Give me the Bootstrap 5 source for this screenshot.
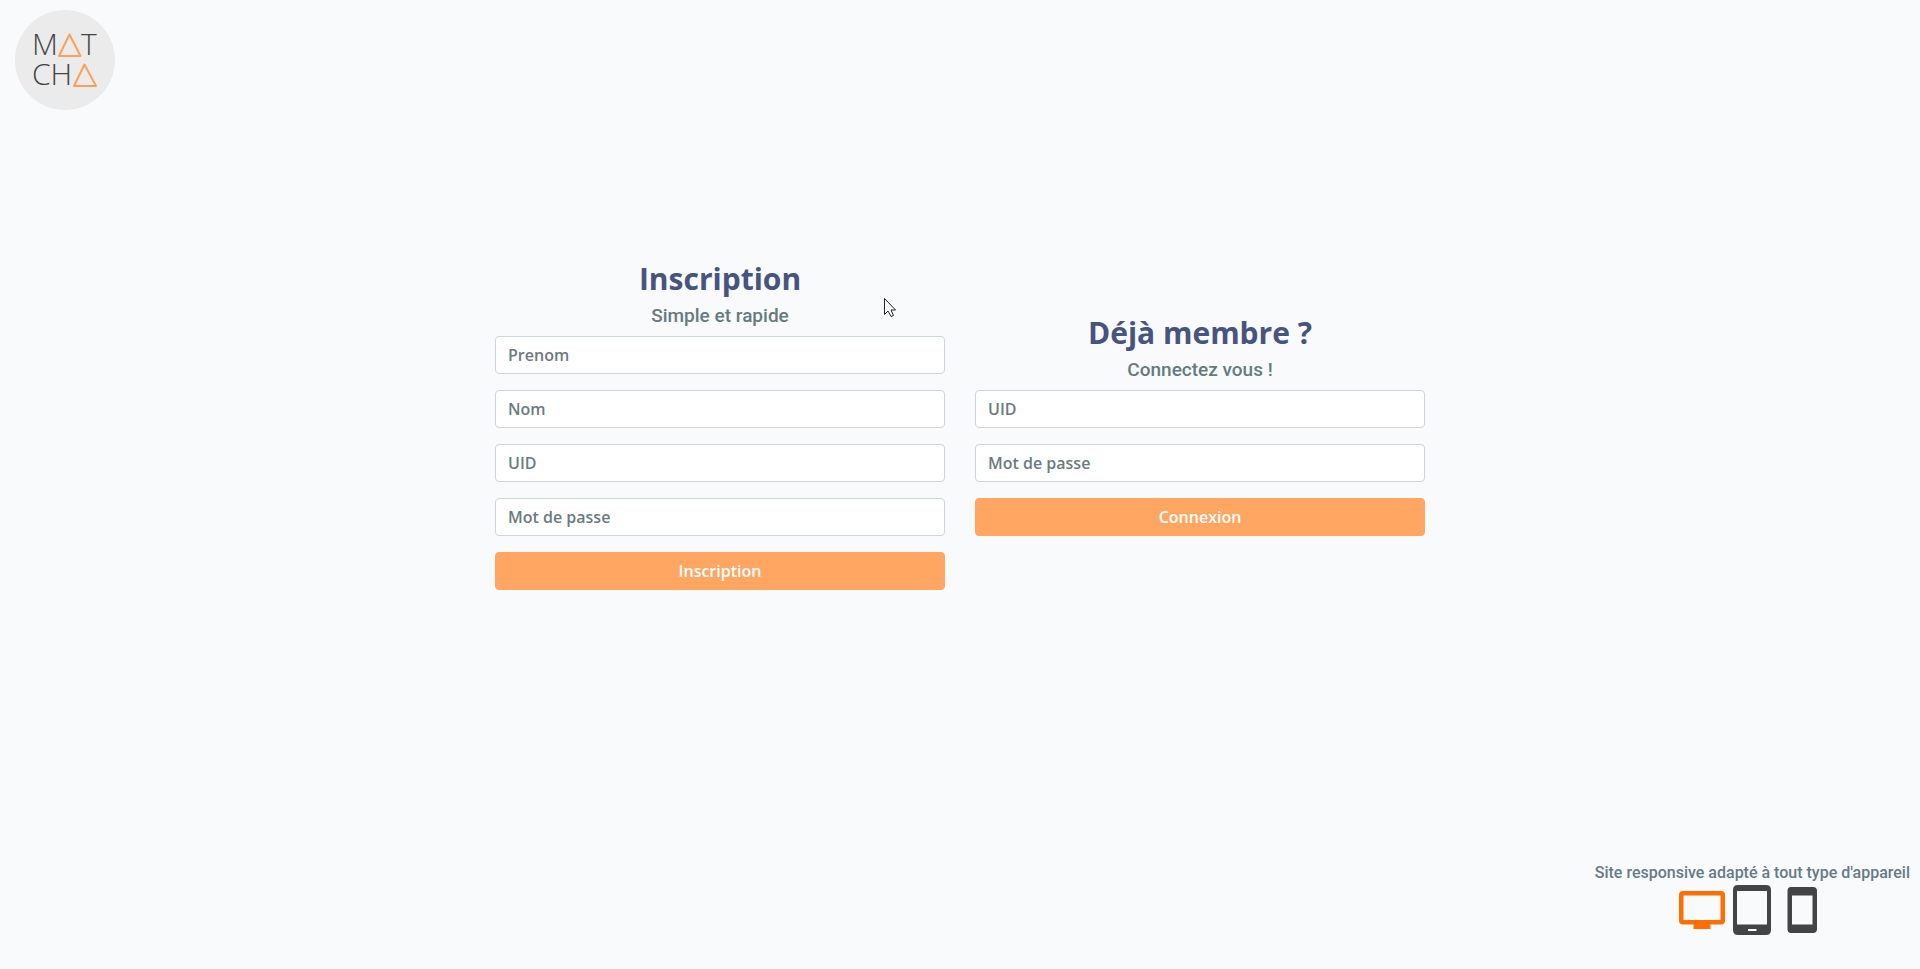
<!DOCTYPE html>
<html lang="fr">
<head>
<meta charset="utf-8">
<meta name="viewport" content="width=device-width, initial-scale=1">
<title>Matcha</title>
<link href="https://cdn.jsdelivr.net/npm/bootstrap@5.3.0/dist/css/bootstrap.min.css" rel="stylesheet">
<style>
  body { background: #f9fafc; color: #657b86; font-family: Roboto, sans-serif; font-weight: 500; }
  .site-header { padding: 10px 15px; }
  .brand-logo { width: 100px; height: 100px; }
  .brand-logo text { font: 300 30px "Open Sans", sans-serif; fill: #444; }
  .forms-wrap { max-width: 960px; --bs-gutter-x: 30px; }
  .forms-wrap .row { --bs-gutter-x: 30px; }
  .form-title { font: 700 30px/36px "Open Sans", sans-serif; color: #47547f; margin-bottom: 7px; }
  .form-subtitle { font-size: 19px; line-height: 23px; font-weight: 500; color: #657b80; margin-bottom: 9px; }
  .form-control { font-family: "Open Sans", sans-serif; font-weight: 550; border-color: #ced4da; border-radius: 4px; height: 38px; }
  .form-control::placeholder { color: #6c7a80; }
  .btn-matcha { --bs-btn-color: #fff; --bs-btn-bg: #ffa662; --bs-btn-border-color: #ffa662; --bs-btn-hover-color: #fff; --bs-btn-hover-bg: #ff9445; --bs-btn-hover-border-color: #ff9445; --bs-btn-border-radius: 4px; --bs-btn-font-weight: 600; --bs-btn-font-family: "Open Sans", sans-serif; height: 38px; }
  .site-footer { padding: 0 10px 34px; line-height: 24px; }
  .site-main { padding-bottom: 130px; }
  .pointer { position: absolute; left: 884px; top: 298px; }
</style>
</head>
<body class="d-flex flex-column min-vh-100 position-relative">
<header class="site-header d-flex">
  <a href="#" aria-label="Matcha" class="d-block lh-1">
    <svg class="brand-logo d-block" viewBox="0 0 100 100">
      <circle cx="50" cy="50" r="50" fill="#ebebeb"/>
      <text x="17" y="45">M</text><text x="66" y="45">T</text><text x="17" y="75">CH</text>
      <path d="M54.5 24.500L44 46H65.500ZM69.500 54.500L59 76H81Z" fill="none" stroke="#ffa058" stroke-width="2" stroke-linejoin="round"/>
    </svg>
  </a>
</header>
<main class="site-main flex-grow-1 d-flex align-items-center">
  <div class="container forms-wrap">
    <div class="row align-items-center">
      <form class="col-md-6 d-flex flex-column">
        <h1 class="form-title text-center">Inscription</h1>
        <h2 class="form-subtitle text-center">Simple et rapide</h2>
        <div class="d-grid gap-3">
          <input type="text" class="form-control" placeholder="Prenom" aria-label="Prenom">
          <input type="text" class="form-control" placeholder="Nom" aria-label="Nom">
          <input type="text" class="form-control" placeholder="UID" aria-label="UID">
          <input type="password" class="form-control" placeholder="Mot de passe" aria-label="Mot de passe">
          <button type="button" class="btn btn-matcha">Inscription</button>
        </div>
      </form>
      <form class="col-md-6 d-flex flex-column">
        <h1 class="form-title text-center">Déjà membre ?</h1>
        <h2 class="form-subtitle text-center">Connectez vous !</h2>
        <div class="d-grid gap-3">
          <input type="text" class="form-control" placeholder="UID" aria-label="UID">
          <input type="password" class="form-control" placeholder="Mot de passe" aria-label="Mot de passe">
          <button type="button" class="btn btn-matcha">Connexion</button>
        </div>
      </form>
    </div>
  </div>
</main>
<footer class="site-footer d-flex justify-content-end">
  <div class="text-center">
    <div>Site responsive adapté à tout type d'appareil</div>
    <div class="d-flex justify-content-center">
      <svg width="50" height="50" viewBox="0 0 50 50"><path d="M6 6H44Q48 6 48 10V35.500Q48 39.500 44 39.500H33.500V44H16.500V39.500H6Q2 39.500 2 35.500V10Q2 6 6 6ZM6.500 10.500V35H43.500V10.500Z" fill="#ff6f00" fill-rule="evenodd"/></svg>
      <svg width="50" height="50" viewBox="0 0 50 50"><path d="M11 0H39Q44 0 44 5V45Q44 50 39 50H11Q6 50 6 45V5Q6 0 11 0ZM10 6V39.500H40V6ZM21 44V46H29.500V44Z" fill="#444" fill-rule="evenodd"/></svg>
      <svg width="50" height="50" viewBox="0 0 50 50"><path d="M14 2H36Q40 2 40 6V44Q40 48 36 48H14Q10.500 48 10.500 44V6Q10.500 2 14 2ZM15 10.500V39.500H35.500V10.500Z" fill="#444" fill-rule="evenodd"/></svg>
    </div>
  </div>
</footer>
<svg class="pointer" width="13" height="20" viewBox="0 0 13 20"><path d="M.5 .5V16.500L4 13L7 18.500L9.500 17.500L7 12H11.500Z" fill="#fff" stroke="#222" stroke-width="1"/></svg>
<script src="https://cdn.jsdelivr.net/npm/bootstrap@5.3.0/dist/js/bootstrap.bundle.min.js"></script>
</body>
</html>
